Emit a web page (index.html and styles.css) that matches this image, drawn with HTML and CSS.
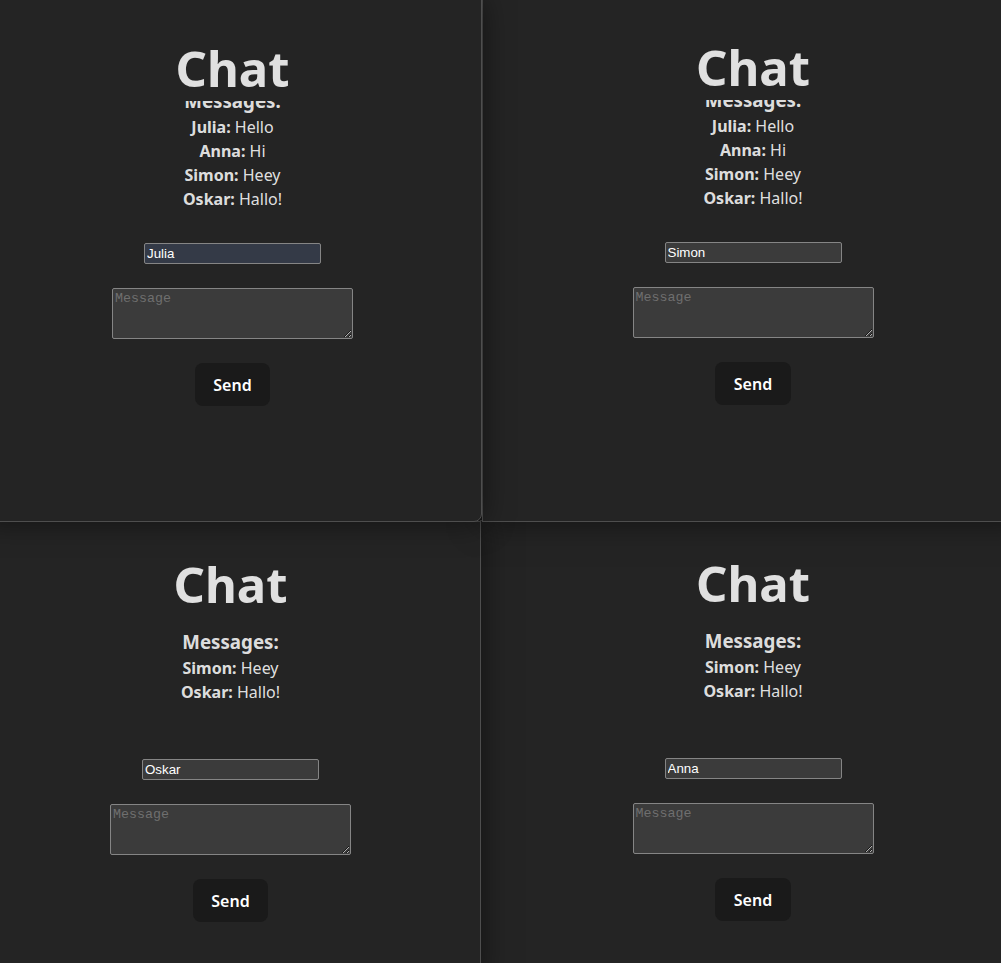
FILE: index.html
```html
<!DOCTYPE html>
<html lang="en">
<head>
<meta charset="utf-8">
<title>Chat</title>
<link rel="stylesheet" href="styles.css">
</head>
<body>
<div class="desktop">
  <section class="win win-tl">
    <div class="app">
      <h1 class="title">Chat</h1>
      <div class="messages messages-full">
        <div class="messages-inner">
          <h3 class="messages-head">Messages:</h3>
          <p class="msg"><b>Julia:</b> Hello</p>
          <p class="msg"><b>Anna:</b> Hi</p>
          <p class="msg"><b>Simon:</b> Heey</p>
          <p class="msg"><b>Oskar:</b> Hallo!</p>
        </div>
      </div>
      <form class="composer">
        <input class="name name-autofill" type="text" value="Julia">
        <textarea class="text" placeholder="Message"></textarea>
        <button class="send" type="button">Send</button>
      </form>
    </div>
  </section>

  <section class="win win-tr">
    <div class="app">
      <h1 class="title">Chat</h1>
      <div class="messages messages-full">
        <div class="messages-inner">
          <h3 class="messages-head">Messages:</h3>
          <p class="msg"><b>Julia:</b> Hello</p>
          <p class="msg"><b>Anna:</b> Hi</p>
          <p class="msg"><b>Simon:</b> Heey</p>
          <p class="msg"><b>Oskar:</b> Hallo!</p>
        </div>
      </div>
      <form class="composer">
        <input class="name" type="text" value="Simon">
        <textarea class="text" placeholder="Message"></textarea>
        <button class="send" type="button">Send</button>
      </form>
    </div>
  </section>

  <section class="win win-bl">
    <div class="app">
      <h1 class="title">Chat</h1>
      <div class="messages">
        <div class="messages-inner">
          <h3 class="messages-head">Messages:</h3>
          <p class="msg"><b>Simon:</b> Heey</p>
          <p class="msg"><b>Oskar:</b> Hallo!</p>
        </div>
      </div>
      <form class="composer">
        <input class="name" type="text" value="Oskar">
        <textarea class="text" placeholder="Message"></textarea>
        <button class="send" type="button">Send</button>
      </form>
    </div>
  </section>

  <section class="win win-br">
    <div class="app">
      <h1 class="title">Chat</h1>
      <div class="messages">
        <div class="messages-inner">
          <h3 class="messages-head">Messages:</h3>
          <p class="msg"><b>Simon:</b> Heey</p>
          <p class="msg"><b>Oskar:</b> Hallo!</p>
        </div>
      </div>
      <form class="composer">
        <input class="name" type="text" value="Anna">
        <textarea class="text" placeholder="Message"></textarea>
        <button class="send" type="button">Send</button>
      </form>
    </div>
  </section>
</div>
</body>
</html>
```

FILE: styles.css
```css
html, body {
  margin: 0;
  padding: 0;
  background: #242424;
  overflow: hidden;
}

.desktop {
  position: relative;
  width: 1001px;
  height: 963px;
  overflow: hidden;
  background: #242424;
  font-family: "Noto Sans", "Open Sans", sans-serif;
  color: rgba(255, 255, 255, 0.87);
}

.win {
  position: absolute;
  box-sizing: border-box;
  background: #242424;
  border: 1px solid #4e4e4e;
  box-shadow: 0 0 30px rgba(0, 0, 0, 0.5);
  overflow: hidden;
}

.win-tl {
  left: -17px;
  top: -1px;
  width: 499px;
  height: 523px;
  border-bottom-right-radius: 8px;
  padding-top: 39px;
  z-index: 4;
}

.win-tr {
  left: 482px;
  top: -1px;
  width: 542px;
  height: 523px;
  padding-top: 38px;
  z-index: 3;
}

.win-bl {
  left: -20px;
  top: 521px;
  width: 501px;
  height: 460px;
  padding-top: 33px;
  z-index: 2;
}

.win-br {
  left: 480px;
  top: 520px;
  width: 546px;
  height: 460px;
  padding-top: 33px;
  z-index: 1;
}

.app {
  display: flex;
  flex-direction: column;
  align-items: center;
  text-align: center;
}

.title {
  margin: 0;
  padding-bottom: 4px;
  font-size: 49px;
  line-height: 58px;
  font-weight: 700;
  color: #e0e0e0;
}

.messages {
  width: 100%;
  height: 110px;
  overflow: hidden;
  display: flex;
  flex-direction: column;
}

.messages-full {
  justify-content: flex-end;
}

.messages-inner {
  flex-shrink: 0;
  padding-top: 11px;
}

.messages-head {
  margin: 0;
  font-size: 18.72px;
  line-height: 28px;
  font-weight: 700;
}

.msg {
  margin: 0;
  font-size: 16px;
  line-height: 24px;
}

.msg b {
  font-weight: 700;
}

.composer {
  margin: 32px 0 0;
  display: flex;
  flex-direction: column;
  align-items: center;
  gap: 24px;
}

.name {
  box-sizing: border-box;
  width: 177px;
  height: 21px;
  margin: 0;
  padding: 1px 2px;
  border: 1px solid #858585;
  border-radius: 2px;
  background: #3b3b3b;
  color: #ffffff;
  font-family: "Liberation Sans", Arial, sans-serif;
  font-size: 13.33px;
  outline: none;
}

.name-autofill {
  background: #343a47;
}

.text {
  box-sizing: border-box;
  width: 241px;
  height: 51px;
  margin: 0;
  padding: 2px;
  border: 1px solid #858585;
  border-radius: 2px;
  background: #3b3b3b;
  color: #ffffff;
  font-family: "Liberation Mono", "DejaVu Sans Mono", monospace;
  font-size: 13.33px;
  color-scheme: dark;
}

.text::placeholder {
  color: #6f6f6f;
}

.send {
  margin: 0;
  padding: 0.6em 1.1em;
  border: 1px solid transparent;
  border-radius: 8px;
  background: #1a1a1a;
  color: #ffffff;
  font-family: "Noto Sans", "Open Sans", sans-serif;
  font-size: 16px;
  font-weight: 600;
  line-height: normal;
  cursor: pointer;
}
```
